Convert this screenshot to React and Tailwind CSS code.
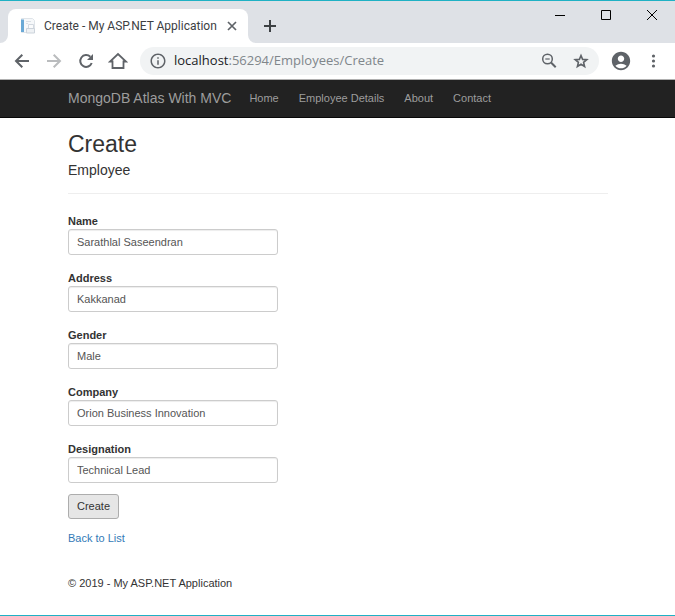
import { MdAccountCircle, MdInfoOutline } from "react-icons/md";

const FIELDS = [
  { id: "name", label: "Name", value: "Sarathlal Saseendran" },
  { id: "address", label: "Address", value: "Kakkanad" },
  { id: "gender", label: "Gender", value: "Male" },
  { id: "company", label: "Company", value: "Orion Business Innovation" },
  { id: "designation", label: "Designation", value: "Technical Lead" },
];

const LINKS = ["Home", "Employee Details", "About", "Contact"];

function PageIcon() {
  return (
    <svg width="16" height="16" viewBox="0 0 16 16" aria-hidden="true" className="shrink-0">
      <path d="M1.500 .5h11l2 2v12h-13z" fill="#f6f8fa" stroke="#dfe4e9" />
      <path d="M1 1.500h3v12.500H1z" fill="#6aa9d6" />
      <path d="M6 3.500h5M6 5.500h2" stroke="#d9dfe5" />
      <path d="M8.500 6.500h5v4h-5z" fill="#fafbfc" stroke="#d3d9e0" />
      <path d="M6.500 10.500h8v4.500h-8z" fill="#eef1f4" stroke="#ccd3db" />
    </svg>
  );
}

function TabCurve({ flip }) {
  return (
    <svg
      width="8"
      height="8"
      viewBox="0 0 8 8"
      aria-hidden="true"
      className={flip ? "shrink-0 -scale-x-100" : "shrink-0"}
    >
      <path d="M8 0v8H0a8 8 0 0 0 8-8z" fill="#fff" />
    </svg>
  );
}

function ToolIcon({ children }) {
  return (
    <svg
      width="20"
      height="20"
      viewBox="0 0 20 20"
      fill="none"
      stroke="currentColor"
      strokeWidth="2"
      aria-hidden="true"
    >
      {children}
    </svg>
  );
}

function TabStrip() {
  return (
    <div className="flex h-[42px] items-end bg-[#dee1e6]">
      <TabCurve />
      <div className="flex h-[34px] w-60 items-center rounded-t-lg bg-white pr-2 pl-3">
        <PageIcon />
        <span className="ml-2 flex-1 text-[12px] whitespace-nowrap text-[#3c4043]">
          Create - My ASP.NET Application
        </span>
        <button type="button" aria-label="Close tab" className="grid size-4 shrink-0 place-items-center">
          <svg width="10" height="10" viewBox="0 0 10 10" aria-hidden="true">
            <path d="M1 1l8 8M9 1l-8 8" stroke="#5f6368" strokeWidth="1.700" />
          </svg>
        </button>
      </div>
      <TabCurve flip />
      <button type="button" aria-label="New tab" className="ml-2 flex h-[34px] items-center">
        <svg width="12" height="12" viewBox="0 0 12 12" aria-hidden="true">
          <path d="M6 0v12M0 6h12" stroke="#3c4043" strokeWidth="2" />
        </svg>
      </button>
      <div className="ml-auto flex self-start">
        <button type="button" aria-label="Minimize" className="grid h-7 w-[46px] place-items-center">
          <svg width="10" height="10" viewBox="0 0 10 10" aria-hidden="true">
            <path d="M0 5.500h10" stroke="#000" />
          </svg>
        </button>
        <button type="button" aria-label="Maximize" className="grid h-7 w-[46px] place-items-center">
          <svg width="10" height="10" viewBox="0 0 10 10" aria-hidden="true">
            <path d="M.5.5h9v9h-9z" stroke="#000" fill="none" />
          </svg>
        </button>
        <button type="button" aria-label="Close" className="grid h-7 w-[46px] place-items-center">
          <svg width="10" height="10" viewBox="0 0 10 10" aria-hidden="true">
            <path d="M0 0l10 10M10 0L0 10" stroke="#000" />
          </svg>
        </button>
      </div>
    </div>
  );
}

function Toolbar() {
  return (
    <div className="flex h-9 items-center bg-white text-[#5f6368]">
      <div className="flex gap-3 pl-3">
        <button type="button" aria-label="Back">
          <ToolIcon>
            <path d="M17 10H4.500M10.300 3.700L4 10l6.300 6.300" />
          </ToolIcon>
        </button>
        <button type="button" aria-label="Forward" className="text-[#babcbe]">
          <ToolIcon>
            <path d="M3 10h12.500M9.700 3.700L16 10l-6.300 6.300" />
          </ToolIcon>
        </button>
        <button type="button" aria-label="Reload">
          <ToolIcon>
            <path d="M14.300 5.800A5.900 5.900 0 1 0 15.700 12" />
            <path d="M17 3v6h-6z" fill="currentColor" stroke="none" />
          </ToolIcon>
        </button>
        <button type="button" aria-label="Home page">
          <ToolIcon>
            <path d="M2 10.500h2.500v6.500h11v-6.500H18L10 3z" strokeWidth="1.800" />
          </ToolIcon>
        </button>
      </div>
      <div className="ml-3 flex h-7 flex-1 items-center rounded-full bg-[#f1f3f4] px-[9px]">
        <MdInfoOutline className="size-[18px] shrink-0" />
        <span className="ml-[7px] flex-1 font-['Open_Sans',sans-serif] text-[13px] whitespace-nowrap text-[#80868b]">
          <span className="text-[#202124]">localhost</span>:56294/Employees/Create
        </span>
        <button type="button" aria-label="Zoom" className="mr-3">
          <ToolIcon>
            <circle cx="7.500" cy="8" r="4.800" strokeWidth="1.500" />
            <path d="M5.300 8h4.400" strokeWidth="1.200" />
            <path d="M11 11.500l4.700 4.700" />
          </ToolIcon>
        </button>
        <button type="button" aria-label="Bookmark this page" className="-mx-px">
          <ToolIcon>
            <path
              d="M10 4.500l1.600 3.900 4.200.3-3.200 2.700 1 4.100-3.600-2.200-3.600 2.200 1-4.100-3.200-2.700 4.200-.3z"
              strokeWidth="1.600"
            />
          </ToolIcon>
        </button>
      </div>
      <button type="button" aria-label="Profile" className="ml-[11px]">
        <MdAccountCircle className="size-[22px]" />
      </button>
      <button type="button" aria-label="Menu" className="mr-3 ml-[11px]">
        <svg width="20" height="20" viewBox="0 0 20 20" fill="currentColor" aria-hidden="true">
          <circle cx="10.500" cy="5" r="1.600" />
          <circle cx="10.500" cy="10" r="1.600" />
          <circle cx="10.500" cy="15" r="1.600" />
        </svg>
      </button>
    </div>
  );
}

export default function App() {
  return (
    <div className="flex min-h-screen flex-col border-y border-[#1fb1c4] bg-white">
      <header className="border-b border-[#b0b0b0] font-[Roboto,sans-serif]">
        <TabStrip />
        <Toolbar />
      </header>
      <div className="flex-1 font-['Liberation_Sans',Arial,sans-serif] text-[11px] leading-[15px] text-[#333]">
        <nav className="flex h-[38px] items-center border-b border-[#080808] bg-[#222] px-[68px] whitespace-nowrap text-[#9d9d9d]">
          <a href="#" className="mr-2 text-[14px]">
            MongoDB Atlas With MVC
          </a>
          {LINKS.map((link) => (
            <a key={link} href="#" className="px-2.5">
              {link}
            </a>
          ))}
        </nav>
        <main className="pr-[67px] pl-[68px]">
          <h2 className="pt-[13px] text-[23px] leading-[26px]">Create</h2>
          <h4 className="pt-1.5 text-[14px] leading-[15px]">Employee</h4>
          <hr className="mt-[15px] mb-5 border-[#eee]" />
          <form onSubmit={(event) => event.preventDefault()}>
            {FIELDS.map((field) => (
              <div key={field.id} className="mb-4">
                <label htmlFor={field.id} className="block font-bold">
                  {field.label}
                </label>
                <input
                  id={field.id}
                  type="text"
                  defaultValue={field.value}
                  className="block h-[26px] w-[210px] rounded-[3px] border border-[#ccc] px-2 text-[#555] shadow-[inset_0_1px_1px_rgba(0,0,0,0.075)]"
                />
              </div>
            ))}
            <button
              type="submit"
              className="-mt-[5px] block h-[25px] rounded-[3px] border border-[#adadad] bg-[#e6e6e6] px-2"
            >
              Create
            </button>
          </form>
          <a href="#" className="mt-3 inline-block text-[#337ab7]">
            Back to List
          </a>
          <footer className="mt-[30px]">© 2019 - My ASP.NET Application</footer>
        </main>
      </div>
    </div>
  );
}
